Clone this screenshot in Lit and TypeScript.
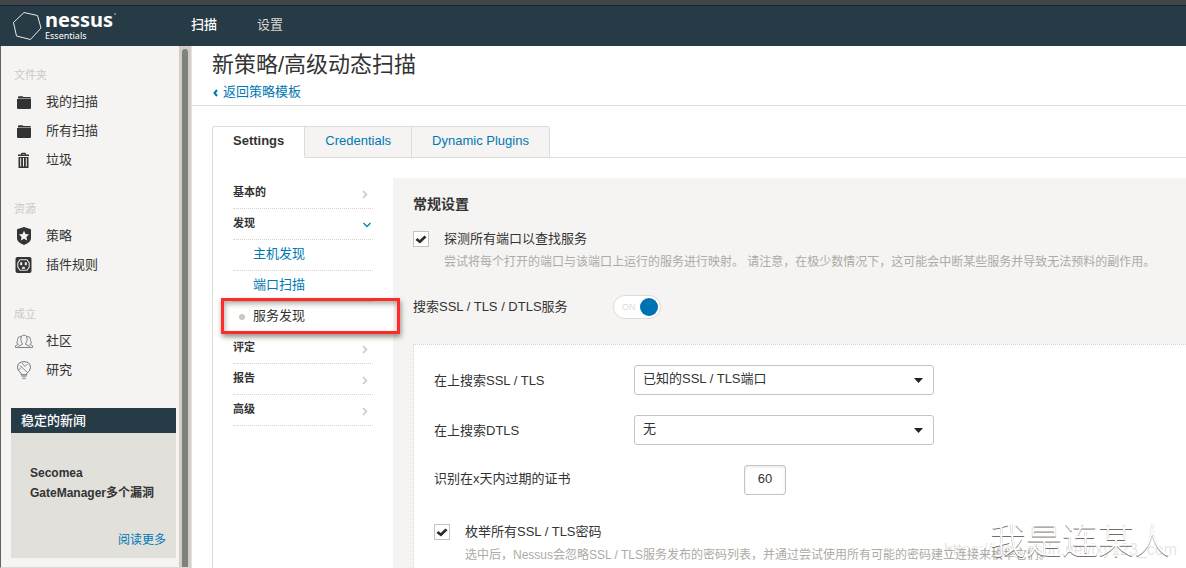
import { LitElement, html, css, svg, nothing } from "lit";
import { customElement, property, state } from "lit/decorators.js";
import { classMap } from "lit/directives/class-map.js";

const icons: Record<string, unknown> = {
  folder: svg`<path fill="#333" d="M4 5.200q0-.9.900-.9h3.500q.600 0 .9.700h6.600q1 0 1 .9v.5H4zM3 7h14v8.800q0 1.200-1.200 1.200H4.200Q3 17 3 15.800z"/>`,
  trash: svg`<path fill="#333" fill-rule="evenodd" d="M7 4q0-1.200 1.200-1.200h2.600Q12 2.800 12 4v.5h3V6H4V4.500h3zM8.300 4v.5h2.400V4zM4.500 7h10v11h-10zM6.200 8v8.500h1V8zm2.800 0v8.500h1V8zm2.800 0v8.500h1V8z"/>`,
  shield: svg`<path fill="#333" d="M10 1 17 3.300v9q0 4-7 6.700-7-2.700-7-6.700v-9z"/><path fill="#f5f4f2" d="m10 4.800 1.500 3.300 3.600.4-2.700 2.400.8 3.600-3.200-1.800-3.200 1.800.8-3.600-2.700-2.400 3.600-.4z"/>`,
  plugin: svg`<rect x="1.500" y="2" width="16" height="16" rx="2" fill="#333"/><path fill="none" stroke="#e8e6e2" stroke-width="1.100" d="M6 4.800h7l2.200 3.200v4L13 15.200H6L3.800 12V8z"/><path fill="#f5f4f2" d="M6.200 7.200h2v3h-2zM10.800 7.200h2v3h-2zM8.500 11.800h2l.8 2H7.700z"/>`,
  people: svg`<g fill="#f5f4f2" stroke="#71797c" stroke-width=".9"><path d="M1.500 16.500v-1.700l2.800-1.500q-.8-.8-1.700-1.200 1-1.300 1-3.600 0-2.900 2.500-2.900t2.500 2.900v5.500l2 2.500z"/><path d="M9 16.500l2.500-2.500V8.500q0-2.900 2.500-2.900t2.500 2.900q0 2.300 1 3.600-.9.400-1.700 1.200l2.800 1.500v1.700z"/><path d="M4.500 16.500v-1.300l3.700-1.700v-1.300Q6.800 10.500 6.800 7.800 6.800 4 10 4t3.200 3.800q0 2.700-1.400 4.400v1.300l3.700 1.700v1.300z"/></g>`,
  bulb: svg`<g fill="none" stroke="#71797c"><path d="M7.300 15v-1.700Q3.500 11 3.500 7.600 3.500 1.700 10 1.700t6.500 5.900q0 3.400-3.800 5.700V15z"/><path stroke-width=".8" d="M7.500 16.800h5M8.500 18.600h3M7.300 14.800h5.400M5 10l2.500-3 5.500 5M8 3l3 3.500L13.500 4M6 5.500l1.500 1.500"/></g>`,
};

interface Entry { icon: string; text: string; }
const groups: { title: string; items: Entry[] }[] = [
  { title: "文件夹", items: [{ icon: "folder", text: "我的扫描" }, { icon: "folder", text: "所有扫描" }, { icon: "trash", text: "垃圾" }] },
  { title: "资源", items: [{ icon: "shield", text: "策略" }, { icon: "plugin", text: "插件规则" }] },
  { title: "成立", items: [{ icon: "people", text: "社区" }, { icon: "bulb", text: "研究" }] },
];

const base = css`
  * { box-sizing: border-box; }
  a { color: inherit; text-decoration: none; }
  ul { list-style: none; margin: 0; padding: 0; }
  h1, h2, h3, p { margin: 0; }
  button, input, select { font: inherit; color: inherit; margin: 0; }
`;

@customElement("top-bar")
class TopBar extends LitElement {
  static styles = [base, css`
    :host { display: block; }
    .strip { height: 6px; background: #424549; border-bottom: 1px solid #17242b; }
    .bar { display: flex; align-items: center; height: 40px; background: #263b46; padding-left: 12px; color: #fff; }
    .logo { display: flex; align-items: center; width: 179px; gap: 3px; }
    .hex { width: 30px; height: 30px; }
    .words { display: flex; flex-direction: column; font-family: "Noto Sans", sans-serif; }
    .name { display: flex; gap: 1px; font-size: 20px; font-weight: 700; line-height: 20px; }
    .dot { width: 2px; height: 2px; margin-top: 3px; border-radius: 50%; background: #8b979d; }
    .edition { font-size: 9px; line-height: 12px; }
    .menu { display: flex; gap: 40px; line-height: 20px; padding-bottom: 2px; }
    .link { color: #d9d6d2; }
    .current { color: #fff; font-weight: 500; }
  `];
  render() {
    return html`
      <div class="strip"></div>
      <header class="bar">
        <a class="logo" href="#" aria-label="nessus Essentials">
          <svg class="hex" viewBox="0 0 30 30"><path d="M1.500 11.500 12 1.500l13.500 3L29 17 18.500 28.500 4.500 25z" fill="none" stroke="#e6eaec"/></svg>
          <span class="words"><span class="name">nessus<span class="dot"></span></span><span class="edition">Essentials</span></span>
        </a>
        <nav class="menu"><a class="link current" href="#">扫描</a><a class="link" href="#">设置</a></nav>
      </header>`;
  }
}

@customElement("side-bar")
class SideBar extends LitElement {
  static styles = [base, css`
    :host { display: flex; background: #f5f4f2; border-left: 1px solid #63625e; border-bottom: 1px solid #dcd9d6; }
    .body { flex: 1; padding: 17px 3px 0 10px; }
    .group { margin-bottom: 23px; }
    .title { font-size: 11px; font-weight: 400; line-height: 24px; padding-left: 3px; color: #cdc8c2; }
    .item { display: flex; align-items: center; gap: 12px; height: 29px; padding-left: 3px; color: #333; }
    .icon { width: 20px; height: 20px; }
    .news { background: #e1e0db; margin-top: 24px; }
    .head { background: #263b46; color: #fff; font-size: 13px; font-weight: 500; line-height: 25px; padding-left: 10px; }
    .story { padding: 30px 10px 8px 19px; font-size: 12px; line-height: 20px; }
    .headline { font-weight: 700; }
    .more { display: block; margin-top: 27px; text-align: right; color: #0078b3; }
    .track { width: 13px; background: #d3cdc8; padding: 3px 3px 0 3px; border-right: 1px solid #e6e3e0; display: flex; }
    .thumb { flex: 1; background: #7f827c; border-radius: 3px 3px 0 0; }
  `];
  render() {
    return html`
      <div class="body">
        ${groups.map((g) => html`<section class="group">
          <h2 class="title">${g.title}</h2>
          <ul>${g.items.map((i) => html`<li><a class="item" href="#"><svg class="icon" viewBox="0 0 20 20">${icons[i.icon]}</svg>${i.text}</a></li>`)}</ul>
        </section>`)}
        <section class="news">
          <h2 class="head">稳定的新闻</h2>
          <div class="story">
            <p class="headline">Secomea<br>GateManager多个漏洞</p>
            <a class="more" href="#">阅读更多</a>
          </div>
        </section>
      </div>
      <div class="track"><div class="thumb"></div></div>`;
  }
}

@customElement("section-menu")
class SectionMenu extends LitElement {
  static styles = [base, css`
    :host { display: block; width: 140px; }
    .row { display: flex; align-items: center; justify-content: space-between; width: 100%; height: 31px; padding: 0 0 2px; border: 0; border-bottom: 1px dotted #d6d3ce; background: none; font-size: 11px; font-weight: 700; text-align: left; }
    .chev { width: 10px; height: 10px; fill: none; stroke: #cbc8c3; stroke-width: 1.500; margin: 3px 3px 0 0; }
    .open { stroke: #0a8fae; margin-right: 1px; }
    .sub { position: relative; display: flex; align-items: center; height: 31px; padding: 0 0 2px 20px; border-bottom: 1px dotted #d6d3ce; color: #0078b3; }
    .here { color: #333; }
    .here::before { content: ""; width: 6px; height: 6px; border-radius: 50%; background: #cbc6c1; margin: 2px 8px 0 -14px; }
    .mark { position: absolute; inset: -4px -27px -2px -12px; border: 3px solid #ff2b2b; box-shadow: 1px 3px 5px rgba(60, 60, 40, .55), inset 1px 3px 5px rgba(60, 60, 40, .4); pointer-events: none; }
  `];
  top(text: string, open = false) {
    return html`<button class="row" type="button" aria-expanded=${open}>${text}
      <svg class=${classMap({ chev: true, open })} viewBox="0 0 10 10"><path d=${open ? "M1.500 3 5 6.500 8.500 3" : "M3 2l3.500 3.500L3 9"}/></svg></button>`;
  }
  sub(text: string, here = false) {
    return html`<li><a class=${classMap({ sub: true, here })} href="#">${text}${here ? html`<span class="mark"></span>` : nothing}</a></li>`;
  }
  render() {
    return html`<ul>
      <li>${this.top("基本的")}</li>
      <li>${this.top("发现", true)}<ul>${this.sub("主机发现")}${this.sub("端口扫描")}${this.sub("服务发现", true)}</ul></li>
      <li>${this.top("评定")}</li><li>${this.top("报告")}</li><li>${this.top("高级")}</li>
    </ul>`;
  }
}

@customElement("check-row")
class CheckRow extends LitElement {
  @property() label = "";
  @property() hint = "";
  static styles = [base, css`
    :host { display: block; }
    .row { display: grid; grid-template-columns: 16px 1fr; column-gap: 15px; }
    .cell { display: grid; margin-top: 2px; height: 16px; }
    .box, .tick { grid-area: 1 / 1; width: 16px; height: 16px; }
    .box { appearance: none; background: #fff; border: 1px solid #c6c3bd; }
    .tick { pointer-events: none; visibility: hidden; }
    .box:checked + .tick { visibility: visible; }
    .label { line-height: 20px; }
    .hint { grid-column: 2; font-size: 12px; line-height: 20px; margin-top: 3px; color: #aeaaa4; white-space: nowrap; }
  `];
  render() {
    return html`<div class="row">
      <span class="cell"><input id="box" class="box" type="checkbox" checked aria-describedby="hint">
        <svg class="tick" viewBox="0 0 16 16"><path fill="#2b2b2b" d="m2.500 9 1.900-1.900 2.300 2L11.500 4.500 13.500 6.300 7 12.500z"/></svg></span>
      <label class="label" for="box">${this.label}</label>
      <p class="hint" id="hint">${this.hint}</p>
    </div>`;
  }
}

@customElement("settings-form")
class SettingsForm extends LitElement {
  static styles = [base, css`
    :host { display: block; background: #f5f4f2; padding: 16px 0 0 20px; }
    .heading { font-size: 14px; font-weight: 700; line-height: 20px; margin-bottom: 15px; }
    .line { display: grid; grid-template-columns: 200px 1fr; margin: 23px 0 25px; line-height: 24px; }
    .switch { display: flex; align-items: center; justify-content: space-between; width: 48px; height: 24px; padding: 0 2px 0 8px; border: 1px solid #dedbd7; border-radius: 12px; background: #fff; font-size: 9px; color: #dcd9d6; }
    .knob { appearance: none; width: 18px; height: 18px; border-radius: 50%; background: #0071b2; }
    .box { background: #fff; border: 1px dotted #d6d3ce; border-right: 0; padding: 20px 20px 60px; }
    .field { display: grid; grid-template-columns: 200px 300px; margin-bottom: 20px; }
    .name { line-height: 32px; height: 30px; }
    .short { line-height: 28px; }
    .pick { display: grid; align-items: center; }
    .select, .arrow { grid-area: 1 / 1; }
    .select { appearance: none; height: 30px; padding: 0 30px 3px 8px; border: 1px solid #c6c6bc; border-radius: 3px; background: #fff; }
    .arrow { width: 9px; height: 5px; justify-self: end; margin-right: 11px; pointer-events: none; }
    .days { width: 42px; height: 30px; margin-left: 110px; padding: 0 0 3px; text-align: center; border: 1px solid #c6c6bc; border-radius: 3px; background: #fff; box-shadow: inset 0 1px 3px rgba(0, 0, 0, .1); }
    .last { margin-top: 27px; }
  `];
  pick(id: string, name: string, value: string) {
    return html`<div class="field"><label class="name" for=${id}>${name}</label>
      <span class="pick"><select class="select" id=${id}><option>${value}</option></select>
      <svg class="arrow" viewBox="0 0 9 5"><path d="M0 0h9L4.500 5z" fill="#222"/></svg></span></div>`;
  }
  render() {
    return html`
      <h2 class="heading">常规设置</h2>
      <check-row label="探测所有端口以查找服务" hint="尝试将每个打开的端口与该端口上运行的服务进行映射。 请注意，在极少数情况下，这可能会中断某些服务并导致无法预料的副作用。"></check-row>
      <div class="line"><label for="ssl">搜索SSL / TLS / DTLS服务</label>
        <label class="switch">ON<input class="knob" id="ssl" type="checkbox" checked></label></div>
      <div class="box">
        ${this.pick("tls", "在上搜索SSL / TLS", "已知的SSL / TLS端口")}
        ${this.pick("dtls", "在上搜索DTLS", "无")}
        <div class="field"><label class="name short" for="days">识别在x天内过期的证书</label><input class="days" id="days" value="60"></div>
        <check-row class="last" label="枚举所有SSL / TLS密码" hint="选中后，Nessus会忽略SSL / TLS服务发布的密码列表，并通过尝试使用所有可能的密码建立连接来枚举它们。"></check-row>
      </div>`;
  }
}

@customElement("app-root")
class AppRoot extends LitElement {
  @state() private tab = "Settings";
  static styles = [base, css`
    :host { position: relative; display: flex; flex-direction: column; height: 100vh; overflow: hidden; background: #fff; color: #333; font: 13px/20px "Liberation Sans", "Noto Sans CJK SC", sans-serif; }
    .page { flex: 1; min-height: 0; display: grid; grid-template-columns: 192px 1fr; }
    .main { min-width: 0; overflow: hidden; }
    .head { padding: 4px 20px 2px; border-bottom: 1px solid #dfdedb; }
    .title { font-size: 22px; font-weight: 400; line-height: 30px; }
    .back { display: flex; align-items: center; gap: 4px; line-height: 23px; color: #0078b3; }
    .angle { width: 7px; height: 8px; fill: none; stroke: #0078b3; stroke-width: 2; margin-top: 3px; }
    .tabs { display: flex; margin: 20px 0 0 20px; }
    .tab { height: 32px; padding: 0 20px 3px; border: 1px solid #dddcd7; border-left: 0; background: #f5f4f2; color: #0078b3; }
    .tab:first-child { border-left: 1px solid #dddcd7; border-top-left-radius: 3px; }
    .tab:last-of-type { border-top-right-radius: 3px; }
    .active { background: #fff; border-bottom-color: #fff; font-weight: 700; color: #333; }
    .rest { flex: 1; border-bottom: 1px solid #dddcd7; }
    .panel { display: grid; grid-template-columns: 140px 1fr; column-gap: 20px; margin-left: 20px; padding: 20px 0 0 20px; border-left: 1px solid #dddcd7; }
    .signature { position: absolute; right: 16px; bottom: 6px; font: 300 36px/48px "Noto Sans CJK SC", sans-serif; color: #fff; text-shadow: 0 1px 0 #746c66; pointer-events: none; }
    .address { position: absolute; right: 9px; bottom: 8px; font-size: 16px; line-height: 20px; color: rgba(150, 150, 150, .25); pointer-events: none; }
  `];
  render() {
    return html`
      <top-bar></top-bar>
      <div class="page">
        <side-bar></side-bar>
        <main class="main">
          <div class="head">
            <h1 class="title">新策略/高级动态扫描</h1>
            <a class="back" href="#"><svg class="angle" viewBox="0 0 7 8"><path d="M5 1 2.500 4 5 7"/></svg>返回策略模板</a>
          </div>
          <div class="tabs">
            ${["Settings", "Credentials", "Dynamic Plugins"].map((t) => html`<button type="button" class=${classMap({ tab: true, active: t === this.tab })} @click=${() => (this.tab = t)}>${t}</button>`)}
            <span class="rest"></span>
          </div>
          <div class="panel"><section-menu></section-menu><settings-form></settings-form></div>
        </main>
      </div>
      <span class="address">https://blog.csdn.net/lxy123_com</span>
      <span class="signature">我是连某人</span>`;
  }
}
